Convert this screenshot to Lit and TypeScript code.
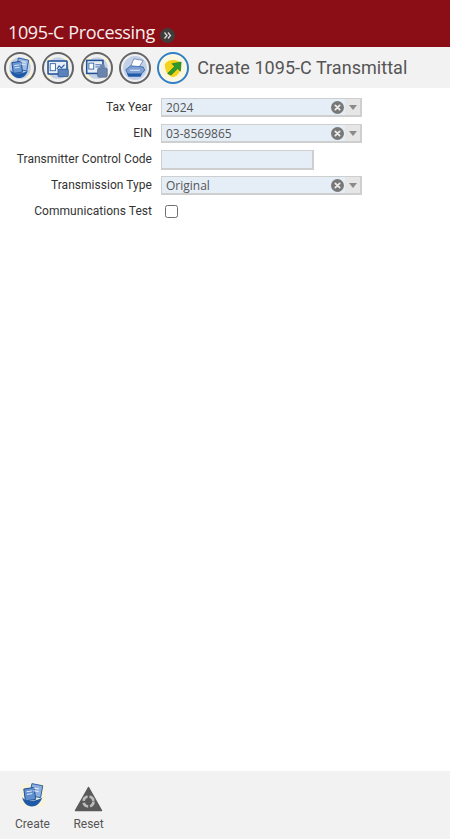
import { LitElement, html, css, svg } from "lit";
import { customElement } from "lit/decorators.js";

const corners = svg`<rect x="1.500" y="2.500" width="21" height="19" fill="#fbf3d4"/><circle cx="12" cy="12" r="10" fill="#c3d0e6"/>`;

const docs = svg`
  ${corners}
  <path d="M10.500 2.800l9.500 2-1.800 10-9.500-2z" fill="#9dbbe3" stroke="#2a5ea6" stroke-width=".9"/>
  <path d="M4.500 7l8.500-1.200 1.300 10L5.800 17z" fill="#6a97d3" stroke="#1f4f96" stroke-width=".9"/>
  <path d="M2.800 13.500c2.500 3.500 8.500 5 16.500 1-1.800 4.500-4.500 6.700-7.800 6.700-4.200 0-7.700-3-8.700-7.700z" fill="#1e5aa8"/>
  <path d="M6.800 9.800l4.500-.6M7 12l4.500-.6M12.500 6l5 .9M12.300 8.200l5 .9" stroke="#e8eef8" stroke-width=".8"/>`;

const screenDoc = svg`
  ${corners}
  <rect x="2.800" y="5.500" width="17.500" height="12" rx=".5" fill="#e8eef6" stroke="#1f4f96" stroke-width="1.400"/>
  <rect x="4.800" y="8" width="4.800" height="6.500" fill="#fff" stroke="#2a5ea6" stroke-width=".8"/>
  <path d="M11 13l2-3 2 2 3-3" fill="none" stroke="#2a5ea6" stroke-width="1"/>
  <rect x="12" y="13" width="9.500" height="7" rx="1" fill="#5b82ba" stroke="#1f4f96" stroke-width=".7"/>`;

const personDoc = svg`
  ${corners}
  <rect x="2.500" y="5" width="15" height="12" fill="#e8eef6" stroke="#1f4f96" stroke-width="1.400"/>
  <rect x="4.500" y="7.500" width="4.500" height="5.500" fill="#fff" stroke="#2a5ea6" stroke-width=".8"/>
  <path d="M10.500 9h5M10.500 11h5" stroke="#2a5ea6" stroke-width=".8"/>
  <rect x="12.500" y="12" width="9" height="8.500" rx="1.500" fill="#6a85ad" stroke="#4a6590" stroke-width=".6"/>
  <circle cx="17" cy="10.500" r="2.300" fill="#6a85ad"/>`;

const printer = svg`
  <circle cx="12" cy="12" r="11" fill="#c3d0e6"/>
  <path d="M11 3.500l8.500 1.500-4.500 7.500-7.500-1z" fill="#fff" stroke="#5a78a8" stroke-width=".7"/>
  <path d="M3.500 13.500l4.500-3.500 11.500 1 1.500 3-3.500 4H5.500z" fill="#7fa0d2" stroke="#2a5ea6" stroke-width=".7"/>
  <path d="M4.500 17h14l-1.500 3H6z" fill="#1e5aa8"/>
  <path d="M7.500 14h9" stroke="#e8eef8" stroke-width="1"/>`;

const badge = svg`
  <circle cx="12" cy="12" r="11" fill="#fbf6dc"/>
  <path d="M4.500 9c0-2.500 4-4.500 7.500-4.500s7.500 1.500 7.500 4.500c0 5.500-2.500 10.500-7.500 11.500C7 19.500 4.500 14.500 4.500 9z" fill="#f3d31c"/>
  <path d="M7 17l6.500-6.500-2.500-2.500 8.500-1.500-.7 8.500-2.500-2.500-6 6z" fill="#2c9a2c" stroke="#176f1b" stroke-width=".5"/>`;

const ICONS = [docs, screenDoc, personDoc, printer];

@customElement("app-root")
export class AppRoot extends LitElement {
  static styles = css`
    :host { display: flex; flex-direction: column; width: 450px; height: 839px; background: #fff; font-family: Roboto, sans-serif; color: #3f3f3f; overflow: hidden; }
    .header { height: 47px; box-sizing: border-box; background: #8b0d15; display: flex; align-items: flex-end; padding: 0 0 4px 8px; gap: 5px; }
    .app-title { font: 18px/24px "Open Sans", sans-serif; letter-spacing: -0.38px; color: #f7eeee; margin-bottom: -1px; }
    .more { width: 15px; height: 15px; border-radius: 50%; background: #403c3c; display: flex; align-items: center; justify-content: center; }
    .toolbar { height: 41px; box-sizing: border-box; background: #f2f2f2; display: flex; align-items: center; padding: 0 0 0 4px; }
    .tool { width: 32px; height: 32px; box-sizing: border-box; border-radius: 50%; border: 2px solid #646464; background: #eef0f4; display: flex; align-items: center; justify-content: center; margin-right: 6.250px; flex: none; overflow: hidden; }
    .tool.active { border-color: #2f7fc4; background: #fbf8e8; }
    .tool svg { width: 26px; height: 26px; }
    .page-title { font-size: 18px; line-height: 24px; color: #555; margin-left: 2px; letter-spacing: 0.04px; white-space: nowrap; }
    .form { flex: 1; padding-top: 10px; display: grid; grid-template-columns: 152px auto 1fr; grid-auto-rows: 20px; column-gap: 9px; row-gap: 6px; align-content: start; }
    .label { grid-column: 1; font-size: 12px; line-height: 18px; letter-spacing: 0.04px; color: #333; text-align: right; white-space: nowrap; }
    .control { grid-column: 2; box-sizing: border-box; }
    .select { width: 201px; height: 19px; display: flex; background: #e5eef7; border-style: solid; border-width: 1px 2px 2px 1px; border-color: #cfcfcf; }
    .value { flex: 1; font: 12px/16px "Open Sans", sans-serif; padding: 1px 0 0 4px; color: #555; }
    .clear { width: 13px; height: 13px; border-radius: 50%; background: #787878; margin: 2px 1px 0 0; display: flex; }
    .clear svg { width: 13px; height: 13px; }
    .caret { width: 15px; background: #e6e6e6; display: flex; align-items: center; justify-content: center; }
    .caret i { width: 0; height: 0; border: 4.500px solid transparent; border-top: 5px solid #8a8a8a; border-bottom: 0; }
    .input { width: 153px; height: 20px; background: #e5eef7; border-style: solid; border-width: 1px 2px 2px 1px; border-color: #cfcfcf; }
    .check-wrap { display: flex; align-items: center; padding-left: 4px; height: 20px; }
    .check { width: 13px; height: 13px; box-sizing: border-box; border: 1px solid #6e6e6e; border-radius: 2.500px; background: #fff; margin-top: -1px; }
    .footer { height: 68px; box-sizing: border-box; background: #f2f2f2; display: flex; padding: 11px 0 0 14px; gap: 19px; }
    .action { display: flex; flex-direction: column; align-items: center; width: 37px; font-size: 12px; line-height: 14px; color: #555; gap: 5px; }
    .icon { width: 32px; height: 30px; display: flex; justify-content: center; }
    .icon.low { align-items: flex-end; }
    .icon svg { display: block; }
  `;

  private select(value: string) {
    return html`<div class="control select">
      <div class="value">${value}</div>
      <div class="clear"><svg viewBox="0 0 13 13"><path d="M4.300 4.300l4.400 4.400M8.700 4.300l-4.400 4.400" stroke="#eee" stroke-width="1.700" stroke-linecap="round"/></svg></div>
      <div class="caret"><i></i></div>
    </div>`;
  }

  render() {
    return html`
      <div class="header">
        <span class="app-title">1095-C Processing</span>
        <span class="more"><svg width="9" height="9" viewBox="0 0 9 9"><path d="M1.500 1.500l2.500 3-2.500 3M5 1.500l2.500 3-2.500 3" fill="none" stroke="#ddd" stroke-width="1.300"/></svg></span>
      </div>
      <div class="toolbar">
        ${ICONS.map((i) => html`<div class="tool"><svg viewBox="0 0 24 24">${i}</svg></div>`)}
        <div class="tool active"><svg viewBox="0 0 24 24">${badge}</svg></div>
        <div class="page-title">Create 1095-C Transmittal</div>
      </div>
      <div class="form">
        <div class="label">Tax Year</div>${this.select("2024")}
        <div class="label">EIN</div>${this.select("03-8569865")}
        <div class="label">Transmitter Control Code</div><div class="control input"></div>
        <div class="label">Transmission Type</div>${this.select("Original")}
        <div class="label">Communications Test</div><div class="control check-wrap"><div class="check"></div></div>
      </div>
      <div class="footer">
        <div class="action"><div class="icon"><svg width="26" height="26" viewBox="0 0 24 24">
          <rect x="1" y="1.500" width="22" height="21" fill="#fbf3d4" opacity=".7"/>
          <path d="M11 1.500l10 2-2 11-10-2z" fill="#8fb0dd" stroke="#2a5ea6" stroke-width=".9"/>
          <path d="M3.500 6.500l9.500-1.500 1.500 11-9.500 1.500z" fill="#5f8fcf" stroke="#1f4f96" stroke-width=".9"/>
          <path d="M2 14c3 4 9 5 18.500.5C18.500 20 15 22.500 11 22.500 6.500 22.500 3 19 2 14z" fill="#1e5aa8"/>
          <path d="M6 9l5-.8M6.300 11.500l5-.8M12.500 5.500l5 .9M12.300 8l5 .9" stroke="#e8eef8" stroke-width=".9"/>
        </svg></div><span>Create</span></div>
        <div class="action"><div class="icon low"><svg width="29" height="26" viewBox="0 0 29 26">
          <path d="M14.500 1.500L1.500 24.500h26z" fill="#5a5a5a" stroke="#5a5a5a" stroke-width="1.500" stroke-linejoin="round"/>
          <circle cx="14.500" cy="15.500" r="5" fill="none" stroke="#bdbdbd" stroke-width="2.600" stroke-dasharray="6 2"/>
        </svg></div><span>Reset</span></div>
      </div>
    `;
  }
}
